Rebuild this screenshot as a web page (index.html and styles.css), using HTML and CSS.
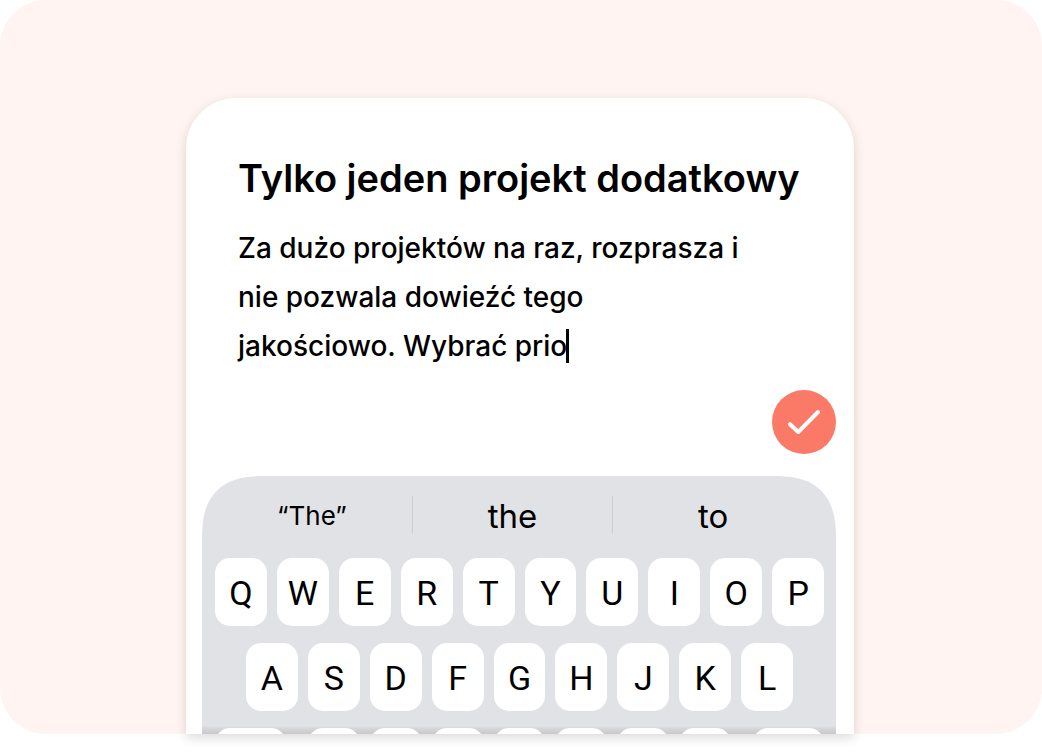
FILE: index.html
```html
<!DOCTYPE html>
<html lang="pl">
<head>
<meta charset="utf-8">
<meta name="viewport" content="width=device-width, initial-scale=1">
<title>Notatka</title>
<link rel="stylesheet" href="styles.css">
</head>
<body>
<main class="stage">
  <section class="card">
    <form class="note">
      <input class="note-title" type="text" aria-label="Tytuł" value="Tylko jeden projekt dodatkowy">
      <div class="note-body">
        <textarea class="note-text" aria-label="Treść" rows="3" spellcheck="false">Za dużo projektów na raz, rozprasza i
nie pozwala dowieźć tego
jakościowo. Wybrać prio</textarea>
        <span class="caret"></span>
      </div>
      <button class="save" type="button" aria-label="Zapisz">
        <svg viewBox="0 0 64 64" fill="none" stroke="#fff" stroke-width="4" stroke-linecap="round" stroke-linejoin="round"><path d="M18 34.2 26.2 42 46 22"/></svg>
      </button>
    </form>
    <div class="keyboard">
      <div class="suggestions">
        <button class="suggestion quoted" type="button">“The”</button>
        <button class="suggestion" type="button">the</button>
        <button class="suggestion" type="button">to</button>
      </div>
      <div class="keys">
        <button class="key" type="button">Q</button><button class="key" type="button">W</button><button class="key" type="button">E</button><button class="key" type="button">R</button><button class="key" type="button">T</button><button class="key" type="button">Y</button><button class="key" type="button">U</button><button class="key" type="button">I</button><button class="key" type="button">O</button><button class="key" type="button">P</button>
      </div>
      <div class="keys keys-home">
        <button class="key" type="button">A</button><button class="key" type="button">S</button><button class="key" type="button">D</button><button class="key" type="button">F</button><button class="key" type="button">G</button><button class="key" type="button">H</button><button class="key" type="button">J</button><button class="key" type="button">K</button><button class="key" type="button">L</button>
      </div>
      <div class="keys keys-cut">
        <button class="key key-wide" type="button" aria-label="Shift"></button>
        <div class="keys-group">
          <button class="key" type="button" aria-label="Z"></button><button class="key" type="button" aria-label="X"></button><button class="key" type="button" aria-label="C"></button><button class="key" type="button" aria-label="V"></button><button class="key" type="button" aria-label="B"></button><button class="key" type="button" aria-label="N"></button><button class="key" type="button" aria-label="M"></button>
        </div>
        <button class="key key-wide" type="button" aria-label="Usuń"></button>
      </div>
    </div>
  </section>
</main>
</body>
</html>
```

FILE: styles.css
```css
* {
  box-sizing: border-box;
}

body {
  margin: 0;
  padding-bottom: 18px;
  background: #fff;
  color: #000;
  font-family: Inter, "Liberation Sans", sans-serif;
}

button,
input,
textarea {
  margin: 0;
  padding: 0;
  border: 0;
  background: none;
  color: inherit;
  font: inherit;
  outline: none;
}

.stage {
  display: flex;
  justify-content: center;
  padding: 98px 16px 0;
  border-radius: 46px;
  background: #fff4f1;
}

.card {
  flex: 0 1 668px;
  margin-right: 2px;
  padding: 55px 18px 0 16px;
  border-radius: 50px 50px 0 0;
  background: #fff;
  box-shadow: 0 4px 12px rgba(0, 0, 0, 0.14);
}

.note {
  display: flex;
  flex-direction: column;
  padding-left: 32px;
}

.note-title {
  width: 100%;
  height: 50px;
  padding-left: 4px;
  font-size: 38px;
  font-weight: 600;
}

.note-body {
  position: relative;
  margin-top: 21px;
}

.note-text {
  display: block;
  width: 100%;
  padding-left: 4px;
  overflow: hidden;
  resize: none;
  font-size: 28px;
  font-weight: 500;
  line-height: 49px;
}

.caret {
  position: absolute;
  left: 332px;
  bottom: 8px;
  width: 3px;
  height: 34px;
  background: #000;
}

.save {
  align-self: flex-end;
  width: 64px;
  height: 64px;
  margin: 19px 0 22px;
  border-radius: 50%;
  background: #fb7967;
}

.save svg {
  display: block;
}

.keyboard {
  display: flex;
  flex-direction: column;
  gap: 17px;
  padding: 20px 12px 0 13px;
  border-radius: 52px 52px 0 0;
  background: linear-gradient(to top, #c9c9ca, #d8d8da 6px, #e1e2e6 8px);
}

@supports (corner-shape: superellipse(1.4)) {
  .keyboard {
    border-radius: 64px 64px 0 0;
    corner-shape: superellipse(1.4);
  }
}

.suggestions {
  display: flex;
  height: 38px;
  margin: 0 11px 7px -3px;
}

.suggestion {
  flex: 1;
  padding-bottom: 2px;
  font-size: 33px;
}

.suggestion + .suggestion {
  border-left: 1px solid #cccdd0;
}

.suggestion.quoted {
  padding-bottom: 0;
  font-size: 26px;
}

.keys,
.keys-group {
  display: flex;
  gap: 10px;
}

.keys-home {
  padding: 0 31px;
}

.keys-cut {
  height: 6px;
  gap: 22px;
  overflow: hidden;
}

.keys-group {
  flex: 1;
}

.key {
  flex: 1;
  height: 68px;
  padding-top: 2px;
  border-radius: 15px;
  background: #fff;
  font-family: Roboto, Inter, sans-serif;
  font-size: 34px;
}

.key-wide {
  flex: 0 0 71px;
}
```
